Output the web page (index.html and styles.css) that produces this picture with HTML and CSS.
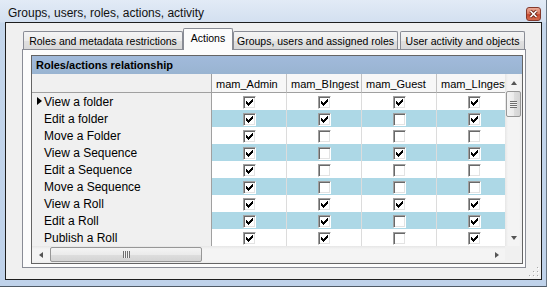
FILE: index.html
```html
<!DOCTYPE html>
<html>
<head>
<meta charset="utf-8">
<title>Groups, users, roles, actions, activity</title>
<link rel="stylesheet" href="styles.css">
</head>
<body>
<svg class="defs" width="0" height="0" aria-hidden="true">
  <defs>
    <symbol id="chk" viewBox="0 0 7 7"><path d="M6 0h1v1h-1z M5 1h2v1h-2z M0 2h1v1h-1z M4 2h3v1h-3z M0 3h2v1h-2z M3 3h3v1h-3z M0 4h5v1h-5z M1 5h3v1h-3z M2 6h1v1h-1z"/></symbol>
  </defs>
</svg>
<div class="window">
  <div class="titlebar">
    <span class="title">Groups, users, roles, actions, activity</span>
    <span class="close"><svg viewBox="0 0 13 12" width="13" height="12"><path class="xo" d="M3.5 3 L9.5 9 M9.5 3 L3.5 9"/><path class="xi" d="M3.5 3 L9.5 9 M9.5 3 L3.5 9"/></svg></span>
  </div>
  <div class="client">
    <div class="tabctl">
      <div class="tabs">
        <div class="tab t1">Roles and metadata restrictions</div>
        <div class="tab t2 sel">Actions</div>
        <div class="tab t3">Groups, users and assigned roles</div>
        <div class="tab t4">User activity and objects</div>
      </div>
      <div class="page">
        <div class="grid">
          <div class="caption">Roles/actions relationship</div>
          <div class="gbody">
            <div class="view">
              <div class="row head"><div class="rh"></div><div class="ch">mam_Admin</div><div class="ch">mam_BIngest</div><div class="ch">mam_Guest</div><div class="ch">mam_LIngest</div></div>
              <div class="row"><div class="rh cur">View a folder</div>
                <div class="c"><i class="cb"><svg class="ck"><use href="#chk"/></svg></i></div>
                <div class="c"><i class="cb"><svg class="ck"><use href="#chk"/></svg></i></div>
                <div class="c"><i class="cb"><svg class="ck"><use href="#chk"/></svg></i></div>
                <div class="c"><i class="cb"><svg class="ck"><use href="#chk"/></svg></i></div>
              </div>
              <div class="row alt"><div class="rh">Edit a folder</div>
                <div class="c"><i class="cb"><svg class="ck"><use href="#chk"/></svg></i></div>
                <div class="c"><i class="cb"><svg class="ck"><use href="#chk"/></svg></i></div>
                <div class="c"><i class="cb"></i></div>
                <div class="c"><i class="cb"><svg class="ck"><use href="#chk"/></svg></i></div>
              </div>
              <div class="row"><div class="rh">Move a Folder</div>
                <div class="c"><i class="cb"><svg class="ck"><use href="#chk"/></svg></i></div>
                <div class="c"><i class="cb"></i></div>
                <div class="c"><i class="cb"></i></div>
                <div class="c"><i class="cb"></i></div>
              </div>
              <div class="row alt"><div class="rh">View a Sequence</div>
                <div class="c"><i class="cb"><svg class="ck"><use href="#chk"/></svg></i></div>
                <div class="c"><i class="cb"></i></div>
                <div class="c"><i class="cb"><svg class="ck"><use href="#chk"/></svg></i></div>
                <div class="c"><i class="cb"><svg class="ck"><use href="#chk"/></svg></i></div>
              </div>
              <div class="row"><div class="rh">Edit a Sequence</div>
                <div class="c"><i class="cb"><svg class="ck"><use href="#chk"/></svg></i></div>
                <div class="c"><i class="cb"></i></div>
                <div class="c"><i class="cb"></i></div>
                <div class="c"><i class="cb"></i></div>
              </div>
              <div class="row alt"><div class="rh">Move a Sequence</div>
                <div class="c"><i class="cb"><svg class="ck"><use href="#chk"/></svg></i></div>
                <div class="c"><i class="cb"></i></div>
                <div class="c"><i class="cb"></i></div>
                <div class="c"><i class="cb"></i></div>
              </div>
              <div class="row"><div class="rh">View a Roll</div>
                <div class="c"><i class="cb"><svg class="ck"><use href="#chk"/></svg></i></div>
                <div class="c"><i class="cb"><svg class="ck"><use href="#chk"/></svg></i></div>
                <div class="c"><i class="cb"><svg class="ck"><use href="#chk"/></svg></i></div>
                <div class="c"><i class="cb"><svg class="ck"><use href="#chk"/></svg></i></div>
              </div>
              <div class="row alt"><div class="rh">Edit a Roll</div>
                <div class="c"><i class="cb"><svg class="ck"><use href="#chk"/></svg></i></div>
                <div class="c"><i class="cb"><svg class="ck"><use href="#chk"/></svg></i></div>
                <div class="c"><i class="cb"></i></div>
                <div class="c"><i class="cb"><svg class="ck"><use href="#chk"/></svg></i></div>
              </div>
              <div class="row"><div class="rh">Publish a Roll</div>
                <div class="c"><i class="cb"><svg class="ck"><use href="#chk"/></svg></i></div>
                <div class="c"><i class="cb"><svg class="ck"><use href="#chk"/></svg></i></div>
                <div class="c"><i class="cb"></i></div>
                <div class="c"><i class="cb"><svg class="ck"><use href="#chk"/></svg></i></div>
              </div>
            </div>
            <div class="vscroll">
              <div class="sbtn"><span class="arr up"></span></div>
              <div class="vthumb"><span class="vgrip"></span></div>
              <div class="fill"></div>
              <div class="sbtn"><span class="arr down"></span></div>
            </div>
          </div>
          <div class="hbar">
            <div class="hscroll">
              <div class="sbtn h"><span class="arr left"></span></div>
              <div class="hthumb"><span class="hgrip"></span></div>
              <div class="fill"></div>
              <div class="sbtn h"><span class="arr right"></span></div>
            </div>
            <div class="corner"></div>
          </div>
        </div>
      </div>
    </div>
    <svg class="sizegrip" viewBox="0 0 10 10" width="10" height="10"><path class="gl" d="M9 1h1v1h-1z M9 5h1v1h-1z M5 5h1v1h-1z M9 9h1v1h-1z M5 9h1v1h-1z M1 9h1v1h-1z"/><path class="gd" d="M8 0h1v1h-1z M8 4h1v1h-1z M4 4h1v1h-1z M8 8h1v1h-1z M4 8h1v1h-1z M0 8h1v1h-1z"/></svg>
  </div>
</div>
</body>
</html>
```

FILE: styles.css
```css
* { box-sizing: border-box; }
html, body { margin: 0; padding: 0; }
body {
  width: 547px;
  height: 287px;
  overflow: hidden;
  background: #c4d5ea;
  font-family: "Liberation Sans", Arial, sans-serif;
  color: #000;
}
.defs { position: absolute; width: 0; height: 0; overflow: hidden; }

.window {
  width: 547px;
  height: 287px;
  display: flex;
  flex-direction: column;
  padding: 0 4px 0 5px;
  background: linear-gradient(#e2ebf6, #d3e0f0 22px, #c4d6eb 23px, #bfd2ea);
  border-bottom: 1px solid #4f5a66;
  border-right: 1px solid #6b7886;
}

.titlebar {
  height: 22px;
  flex: none;
  display: flex;
  align-items: flex-start;
  justify-content: space-between;
  padding: 0 1px 0 3px;
}
.title {
  margin-top: 6px;
  font-size: 12px;
  line-height: 14px;
  color: #111;
  white-space: nowrap;
}
.close {
  margin-top: 7px;
  width: 15px;
  height: 14px;
  border: 1px solid #84392c;
  border-radius: 3px;
  background: linear-gradient(#eaa996, #dc7c63 45%, #c84a30 55%, #d36a4d);
  display: flex;
  align-items: center;
  justify-content: center;
}
.close svg { display: block; }
.close .xo { stroke: #6a2418; stroke-width: 3.4; fill: none; }
.close .xi { stroke: #fff; stroke-width: 1.6; fill: none; }

.client {
  position: relative;
  height: 258px;
  flex: none;
  border: 1px solid #1e1e1e;
  background: #f0f0f0;
  padding: 5px 0 0 16px;
}

.tabctl { width: 504px; }
.tabs {
  height: 21px;
  display: flex;
  align-items: flex-end;
  gap: 2px;
  padding-left: 1px;
}
.tab {
  height: 18px;
  border: 1px solid #898c95;
  border-bottom: none;
  border-radius: 2px 2px 0 0;
  background: linear-gradient(#f4f4f4, #ececec 50%, #e0e0e0 51%, #d9d9d9);
  font-size: 10.5px;
  line-height: 14px;
  display: flex;
  align-items: center;
  justify-content: center;
  white-space: nowrap;
}
.t1 { width: 160px; }
.t3 { width: 165px; }
.t4 { width: 125px; }
.tab.sel {
  width: 50px;
  height: 22px;
  margin: 0 -2px -1px;
  padding-bottom: 3px;
  background: #fcfcfc;
  position: relative;
  z-index: 1;
}

.page {
  height: 219px;
  border: 1px solid #898c95;
  background: #fcfcfc;
  padding: 5px 0 0 8px;
}

.grid {
  width: 492px;
  border: 1px solid #646464;
  background: #fff;
}
.caption {
  height: 18px;
  background: linear-gradient(#a1badb, #99b4d1);
  font-weight: bold;
  font-size: 11px;
  line-height: 19px;
  padding-left: 4px;
  white-space: nowrap;
}
.gbody { display: flex; height: 172px; }
.view { width: 473px; overflow: hidden; }
.row {
  display: grid;
  grid-template-columns: 180px repeat(4, 75px);
  height: 17px;
}
.row.head { height: 19px; }
.rh {
  position: relative;
  background: #f0f0f0;
  border-right: 1px solid #a0a0a0;
  border-bottom: 1px solid #a0a0a0;
  font-size: 12px;
  line-height: 16px;
  padding: 1px 0 0 12px;
  white-space: nowrap;
}
.rh.cur::before {
  content: "";
  position: absolute;
  left: 5px;
  top: 4px;
  border-left: 5px solid #000;
  border-top: 4.5px solid transparent;
  border-bottom: 4.5px solid transparent;
}
.ch {
  background: #f7f7f7;
  border-right: 1px solid #c2c2c2;
  border-bottom: 1px solid #a0a0a0;
  font-size: 11px;
  line-height: 20px;
  padding-left: 4px;
  white-space: nowrap;
  overflow: hidden;
}
.c {
  background: #fff;
  border-right: 1px solid #dcdcdc;
  display: flex;
  align-items: center;
  justify-content: center;
}
.alt .c { background: #add8e6; }
.cb {
  width: 13px;
  height: 13px;
  border: 1px solid;
  border-color: #a0a0a0 #fff #fff #a0a0a0;
  box-shadow: inset 1px 1px 0 #696969, inset -1px -1px 0 #e3e3e3;
  background: #fff;
  display: flex;
  align-items: center;
  justify-content: center;
}
.ck { width: 7px; height: 7px; fill: #000; display: block; }

.vscroll {
  width: 17px;
  display: flex;
  flex-direction: column;
  background: linear-gradient(to right, #e6e6e6, #f4f4f4 3px, #f4f4f4 14px, #ececec);
}
.sbtn {
  height: 17px;
  flex: none;
  display: flex;
  align-items: center;
  justify-content: center;
}
.sbtn.h { width: 17px; height: 17px; }
.fill { flex: 1; }
.arr { width: 0; height: 0; }
.arr.up { border-left: 3.5px solid transparent; border-right: 3.5px solid transparent; border-bottom: 4px solid #555; }
.arr.down { border-left: 3.5px solid transparent; border-right: 3.5px solid transparent; border-top: 4px solid #555; }
.arr.left { border-top: 3.5px solid transparent; border-bottom: 3.5px solid transparent; border-right: 4px solid #555; }
.arr.right { border-top: 3.5px solid transparent; border-bottom: 3.5px solid transparent; border-left: 4px solid #555; }
.vthumb {
  height: 26px;
  margin: 0 1px;
  border: 1px solid #979797;
  border-radius: 2px;
  background: linear-gradient(to right, #f4f4f4, #ebebeb 50%, #dedede 51%, #d4d4d4);
  display: flex;
  align-items: center;
  justify-content: center;
}
.vgrip {
  width: 7px;
  height: 7px;
  background: repeating-linear-gradient(#6f6f6f 0 1px, #f2f2f2 1px 2px);
}
.hbar { display: flex; height: 17px; }
.hscroll {
  width: 473px;
  display: flex;
  align-items: center;
  background: linear-gradient(#e6e6e6, #f4f4f4 3px, #f4f4f4 14px, #ececec);
}
.hthumb {
  width: 152px;
  height: 15px;
  margin-left: 1px;
  border: 1px solid #979797;
  border-radius: 2px;
  background: linear-gradient(#f4f4f4, #ebebeb 50%, #dedede 51%, #d4d4d4);
  display: flex;
  align-items: center;
  justify-content: center;
}
.hgrip {
  width: 7px;
  height: 7px;
  background: repeating-linear-gradient(to right, #6f6f6f 0 1px, #f2f2f2 1px 2px);
}
.corner { width: 17px; background: #f0f0f0; }

.sizegrip { position: absolute; right: 2px; bottom: 2px; }
.sizegrip .gl { fill: #ffffff; }
.sizegrip .gd { fill: #a8a8a8; }
```
